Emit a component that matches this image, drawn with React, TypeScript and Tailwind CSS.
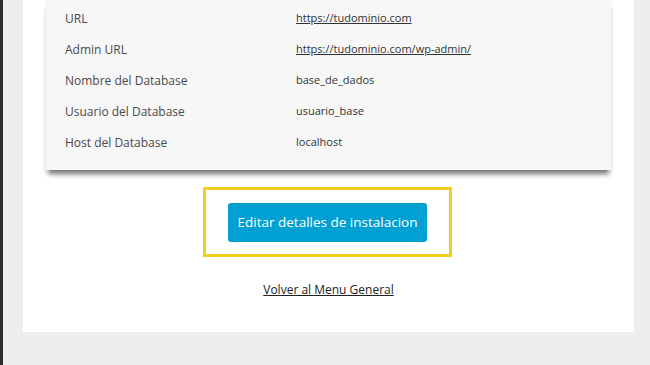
export default function App() {
  const rows = [
    { label: 'URL', value: 'https://tudominio.com', link: true },
    { label: 'Admin URL', value: 'https://tudominio.com/wp-admin/', link: true },
    { label: 'Nombre del Database', value: 'base_de_dados', link: false },
    { label: 'Usuario del Database', value: 'usuario_base', link: false },
    { label: 'Host del Database', value: 'localhost', link: false },
  ]

  return (
    <div className="h-[365px] w-[650px] overflow-hidden bg-[#eeeeee] border-l-[3px] border-[#2c2c2c] font-['Open_Sans',sans-serif]">
      <div className="ml-[20px] w-[611px] bg-white pb-[33px]">
        {/* details card */}
        <div className="mx-[23px] bg-[#f7f7f7] pt-[3px] pb-[12px] pl-[19px] shadow-[0_6px_5px_-2px_rgba(0,0,0,0.55)]">
          {rows.map(row => (
            <div key={row.label} className="flex h-[31px] items-center">
              <div className="w-[231px] text-[12px] text-[#4a4a4a]">{row.label}</div>
              <div className="text-[11px] text-[#333333]">
                {row.link ? <a href="#" className="underline">{row.value}</a> : row.value}
              </div>
            </div>
          ))}
        </div>

        {/* edit button */}
        <div className="mt-[17px] flex justify-center">
          <div className="ml-[-2px] border-[3px] border-[#f0d01c] px-[22px] pt-[13px] pb-[12px]">
            <button className="h-[39px] w-[199px] whitespace-nowrap rounded-[3px] bg-[#00a0d2] text-[13.5px] text-white">
              Editar detalles de instalacion
            </button>
          </div>
        </div>

        <div className="mt-[24px] flex justify-center">
          <a href="#" className="text-[12px] text-[#222222] underline">Volver al Menu General</a>
        </div>
      </div>
    </div>
  )
}
